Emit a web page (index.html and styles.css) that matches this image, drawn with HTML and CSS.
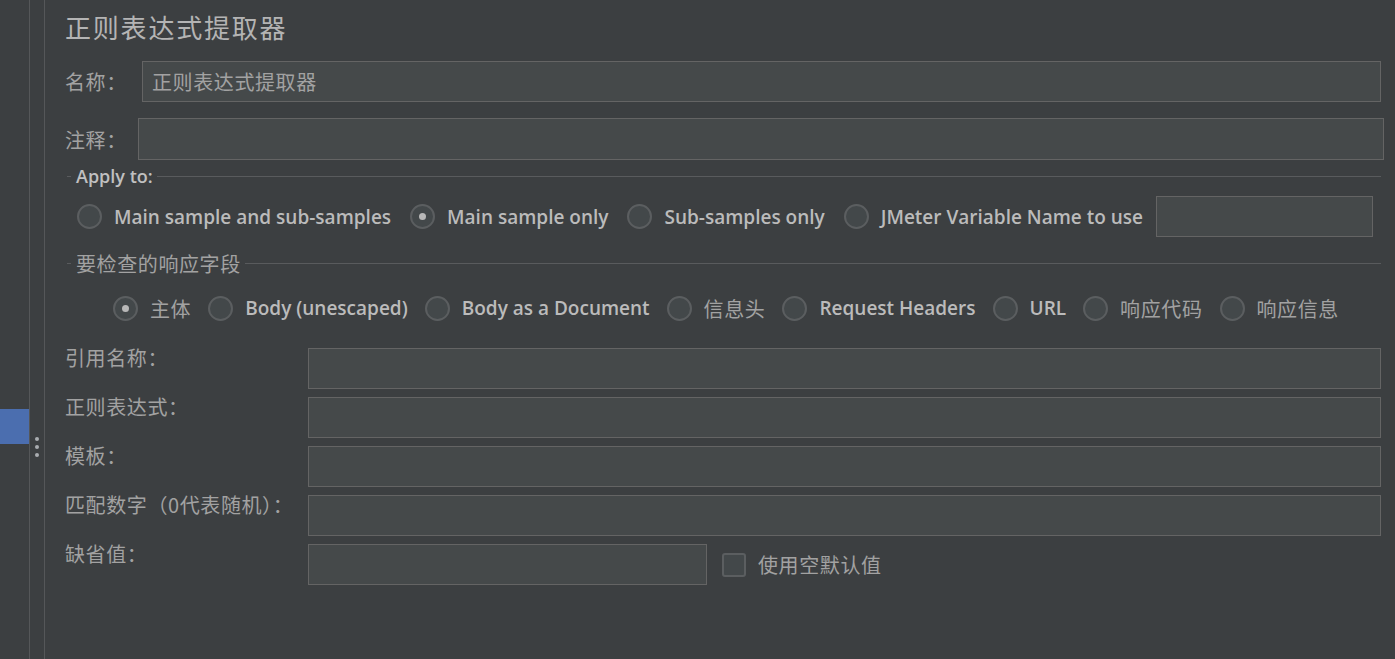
FILE: index.html
```html
<!DOCTYPE html>
<html lang="zh-CN">
<head>
    <meta charset="UTF-8">
    <title>正则表达式提取器</title>
    <link rel="stylesheet" href="styles.css">
</head>
<body>
    <div class="app">
        <div class="side">
            <div class="tree"><div class="tree-sel"></div></div>
            <div class="split"><span class="grip"><i></i><i></i><i></i></span></div>
        </div>
        <div class="panel">
            <div class="title">正则表达式提取器</div>

            <div class="row row-name">
                <span class="lbl lbl-name">名称：</span>
                <div class="field"><span class="value">正则表达式提取器</span></div>
            </div>
            <div class="row row-comment">
                <span class="lbl lbl-comment">注释：</span>
                <div class="field"></div>
            </div>

            <div class="group-title en"><span>Apply to:</span></div>
            <div class="radios radios-apply">
                <span class="opt"><span class="radio"></span><span class="en">Main sample and sub-samples</span></span>
                <span class="opt"><span class="radio checked"></span><span class="en">Main sample only</span></span>
                <span class="opt"><span class="radio"></span><span class="en">Sub-samples only</span></span>
                <span class="opt"><span class="radio"></span><span class="en">JMeter Variable Name to use</span></span>
                <div class="field field-var"></div>
            </div>

            <div class="group-title zh group-2"><span>要检查的响应字段</span></div>
            <div class="radios radios-field">
                <span class="opt"><span class="radio checked"></span><span class="zh">主体</span></span>
                <span class="opt"><span class="radio"></span><span class="en">Body (unescaped)</span></span>
                <span class="opt"><span class="radio"></span><span class="en">Body as a Document</span></span>
                <span class="opt"><span class="radio"></span><span class="zh">信息头</span></span>
                <span class="opt"><span class="radio"></span><span class="en">Request Headers</span></span>
                <span class="opt"><span class="radio"></span><span class="en">URL</span></span>
                <span class="opt"><span class="radio"></span><span class="zh">响应代码</span></span>
                <span class="opt"><span class="radio"></span><span class="zh">响应信息</span></span>
            </div>

            <div class="form">
                <div class="frow"><span class="flbl">引用名称：</span><div class="field"></div></div>
                <div class="frow"><span class="flbl">正则表达式：</span><div class="field"></div></div>
                <div class="frow"><span class="flbl">模板：</span><div class="field"></div></div>
                <div class="frow"><span class="flbl">匹配数字（0代表随机）：</span><div class="field"></div></div>
                <div class="frow">
                    <span class="flbl">缺省值：</span>
                    <div class="field field-short"></div>
                    <span class="check"><span class="box"></span><span class="zh">使用空默认值</span></span>
                </div>
            </div>
        </div>
    </div>
</body>
</html>
```

FILE: styles.css
```css
* {
    box-sizing: border-box;
}
body {
    margin: 0;
    background: #3c3f41;
    font-family: "Open Sans", "Noto Sans CJK SC", sans-serif;
    color: #bbbbbb;
}
.app {
    display: flex;
    height: 659px;
    overflow: hidden;
}

/* left tree + splitter */
.side {
    display: flex;
    flex: none;
}
.tree {
    width: 30px;
    border-right: 1px solid #555759;
}
.tree-sel {
    margin-top: 409px;
    height: 35px;
    width: 29px;
    background: #4b6eaf;
}
.split {
    width: 15px;
    border-right: 1px solid #555759;
    display: flex;
    justify-content: center;
}
.grip {
    margin-top: 437px;
    margin-right: 1px;
    display: flex;
    flex-direction: column;
    gap: 4px;
}
.grip i {
    display: block;
    width: 4px;
    height: 4px;
    border-radius: 50%;
    background: #a9adb0;
}

/* main panel */
.panel {
    flex: 1;
    padding: 0 14px 0 20px;
}
.title {
    margin-top: 8px;
    font-family: "Noto Sans CJK SC", sans-serif;
    font-size: 26px;
    letter-spacing: 1.8px;
    line-height: 38px;
    color: #b4b4b4;
}
.zh, .lbl, .flbl, .value {
    font-family: "Noto Sans CJK SC", sans-serif;
    color: #a2a2a2;
    font-size: 20px;
    letter-spacing: 0.6px;
}
.en {
    font-size: 19px;
    font-weight: 600;
    color: #bbbbbb;
}

.field {
    flex: 1;
    height: 41px;
    background: #45494a;
    border: 1px solid #646464;
    display: flex;
    align-items: center;
    padding-left: 9px;
}
.row {
    display: flex;
    align-items: center;
}
.row-name {
    margin-top: 15px;
}
.row-name .lbl {
    width: 77px;
}
.row-comment {
    margin-top: 16px;
    margin-right: -3px;
}
.row-comment .lbl {
    width: 73px;
}
.row-comment .field {
    height: 42px;
}

.group-title {
    display: flex;
    align-items: center;
    margin-top: 5px;
    padding-left: 2px;
    height: 22px;
}
.group-title::before {
    content: "";
    width: 4px;
    border-top: 1px solid #595b5d;
    margin-right: 5px;
}
.group-title::after {
    content: "";
    flex: 1;
    border-top: 1px solid #595b5d;
    margin-left: 4px;
}
.group-title.en span {
    font-weight: 600;
    font-size: 18px;
    color: #c0c0c0;
}
.group-2 {
    margin-top: 15px;
}

.radios {
    display: flex;
    align-items: center;
}
.radios-apply {
    margin-top: 9px;
    padding-left: 12px;
    margin-right: 7px;
}
.radios-apply .opt {
    margin-right: 19px;
}
.radios-field {
    margin-top: 21px;
    padding-left: 48px;
    height: 26px;
}
.opt {
    display: flex;
    align-items: center;
    gap: 12px;
    margin-right: 17px;
    white-space: nowrap;
}
.radio {
    width: 25px;
    height: 25px;
    border-radius: 50%;
    border: 2px solid #5b5e60;
    background: #43484a;
    display: flex;
    align-items: center;
    justify-content: center;
}
.radio.checked::after {
    content: "";
    width: 7px;
    height: 7px;
    border-radius: 50%;
    background: #b8b8b8;
}
.field-var {
    flex: none;
    width: 217px;
    margin-left: -6px;
}

.form {
    margin-top: 27px;
    display: flex;
    flex-direction: column;
    gap: 8px;
}
.frow {
    display: flex;
    align-items: center;
}
.flbl {
    width: 243px;
    flex: none;
    align-self: flex-start;
    line-height: 20px;
}
.field-short {
    flex: none;
    width: 399px;
}
.check {
    display: flex;
    align-items: center;
    gap: 12px;
    margin-left: 15px;
}
.box {
    width: 24px;
    height: 24px;
    border: 2px solid #5b5e60;
    border-radius: 3px;
    background: #43484a;
}
```
